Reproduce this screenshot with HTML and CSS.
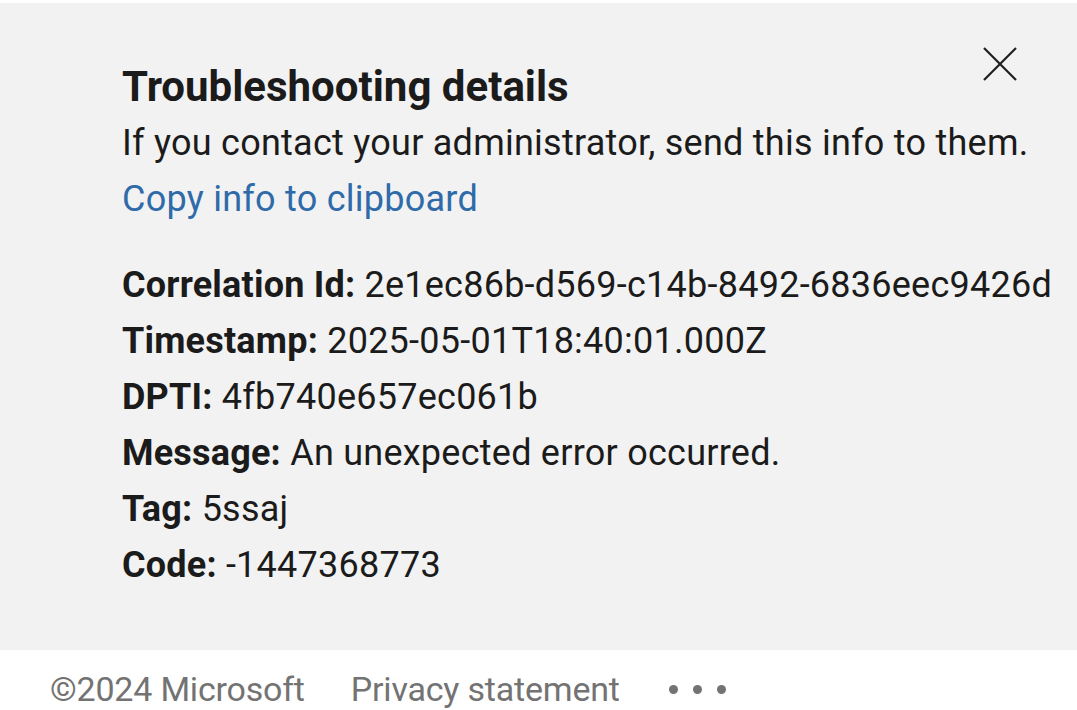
FILE: index.html
```html
<!DOCTYPE html>
<html>
<head>
<meta charset="utf-8">
<link rel="stylesheet" href="styles.css">
</head>
<body>
<div class="page">
  <div class="panel">
    <div class="close" aria-label="Close">
      <svg width="34" height="34" viewBox="0 0 34 34"><path d="M1 1 L33 33 M33 1 L1 33" stroke="#1f1f1f" stroke-width="2.2" fill="none"/></svg>
    </div>
    <div class="content">
      <h1 class="title">Troubleshooting details</h1>
      <p class="line">If you contact your administrator, send this info to them.</p>
      <p class="line link">Copy info to clipboard</p>
      <div class="details">
        <p class="line"><b>Correlation Id:</b> 2e1ec86b-d569-c14b-8492-6836eec9426d</p>
        <p class="line"><b>Timestamp:</b> 2025-05-01T18:40:01.000Z</p>
        <p class="line"><b>DPTI:</b> 4fb740e657ec061b</p>
        <p class="line"><b>Message:</b> An unexpected error occurred.</p>
        <p class="line"><b>Tag:</b> 5ssaj</p>
        <p class="line"><b>Code:</b> -1447368773</p>
      </div>
    </div>
  </div>
  <div class="footer">
    <span class="fitem">©2024 Microsoft</span>
    <span class="fitem">Privacy statement</span>
    <span class="dots"><i></i><i></i><i></i></span>
  </div>
</div>
</body>
</html>
```
FILE: styles.css
```css
html, body { margin: 0; padding: 0; background: #fff; }
body { font-family: Roboto, "Liberation Sans", sans-serif; color: #1b1b1b; overflow: hidden; }
.page { width: 1077px; height: 710px; padding-top: 3px; box-sizing: border-box; }
.panel { position: relative; background: #f2f2f2; height: 647px; box-sizing: border-box; padding: 59px 0 0 122px; }
.close { position: absolute; left: 983px; top: 44px; width: 34px; height: 34px; }
.close svg { display: block; }
.title { margin: 0 0 3px; font-size: 42px; font-weight: 700; line-height: 50px; color: #1b1b1b; }
.line { margin: 0; font-size: 36px; line-height: 56px; letter-spacing: 0.25px; white-space: nowrap; }
.line b { font-weight: 700; letter-spacing: 0.2px; }
.link { color: #2f6aa9; }
.details { margin-top: 30px; }
.footer { display: flex; align-items: center; height: 60px; box-sizing: border-box; padding: 18px 0 0 50px; line-height: 40px; color: #737373; font-size: 34px; }
.fitem { white-space: nowrap; letter-spacing: -0.2px; }
.fitem + .fitem { margin-left: 46px; }
.dots { display: flex; gap: 15px; margin-left: 49px; }
.dots i { width: 9px; height: 9px; border-radius: 50%; background: #737373; display: block; }
```
